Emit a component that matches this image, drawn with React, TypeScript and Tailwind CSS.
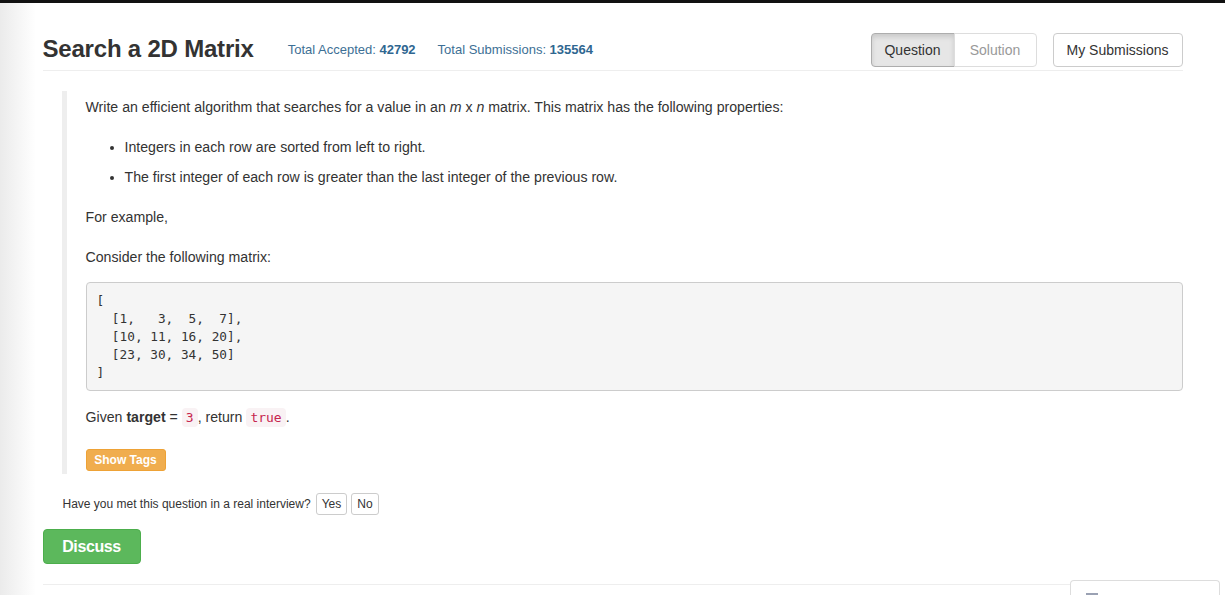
const font = { fontFamily: '"Liberation Sans", Arial, sans-serif' };
const mono = { fontFamily: '"DejaVu Sans Mono", "Liberation Mono", monospace' };

function Header() {
  return (
    <div className="flex items-center border-b border-[#eee] pt-[30px] pb-[3px]">
      <h1 className="-mt-[3px] text-[24px] leading-[34px] font-bold tracking-[-0.2px] text-[#333]">
        Search a 2D Matrix
      </h1>
      <div className="ml-[34px] flex gap-[22px] text-[13px] text-[#3d6f95]">
        <span>
          Total Accepted: <b className="text-[#2f6791]">42792</b>
        </span>
        <span>
          Total Submissions: <b className="text-[#2f6791]">135564</b>
        </span>
      </div>
      <div className="ml-auto flex">
        <button className="h-[34px] w-[84px] rounded-l-[4px] border border-[#adadad] bg-[#e6e6e6] text-[14px] text-[#333] shadow-[inset_0_3px_5px_rgba(0,0,0,0.125)]">
          Question
        </button>
        <button className="-ml-px h-[34px] w-[83px] rounded-r-[4px] border border-[#ddd] bg-white text-[14px] text-[#999]">
          Solution
        </button>
        <button className="ml-[16px] h-[34px] w-[130px] rounded-[4px] border border-[#ccc] bg-white text-[14px] text-[#333]">
          My Submissions
        </button>
      </div>
    </div>
  );
}

function Question() {
  return (
    <blockquote className="mt-[20px] ml-[19px] border-l-[5px] border-[#eee] pt-[6px] pb-[3px] pl-[19px] text-[14.15px] leading-[20px] text-[#333]">
      <p className="mb-[20px]">
        Write an efficient algorithm that searches for a value in an <i>m</i> x <i>n</i> matrix. This matrix has the following properties:
      </p>
      <ul className="mb-[20px] list-disc pl-[39px]">
        <li className="mb-[10px]">Integers in each row are sorted from left to right.</li>
        <li className="mb-[10px]">The first integer of each row is greater than the last integer of the previous row.</li>
      </ul>
      <p className="mb-[20px]">For example,</p>
      <p className="mb-[15px]">Consider the following matrix:</p>
      <pre
        className="mb-[16px] rounded-[4px] border border-[#ccc] bg-[#f5f5f5] px-[10px] py-[8.5px] text-[12.75px] leading-[18px] text-[#333]"
        style={mono}
      >
{`[
  [1,   3,  5,  7],
  [10, 11, 16, 20],
  [23, 30, 34, 50]
]`}
      </pre>
      <p className="mb-[21px]">
        Given <b>target</b> ={" "}
        <code className="rounded-[4px] bg-[#f9f2f4] px-[4px] py-[2px] text-[13px] text-[#c7254e]" style={mono}>
          3
        </code>
        , return{" "}
        <code className="rounded-[4px] bg-[#f9f2f4] px-[4px] py-[2px] text-[13px] text-[#c7254e]" style={mono}>
          true
        </code>
        .
      </p>
      <button className="h-[22px] w-[80px] rounded-[3px] border border-[#eea236] bg-[#f0ad4e] text-[12px] font-bold text-white">
        Show Tags
      </button>
    </blockquote>
  );
}

export default function App() {
  return (
    <div className="min-h-[595px] bg-[linear-gradient(to_right,#ebebeb,#ffffff_36px)]" style={font}>
      <div className="h-[3px] bg-[#111]" />
      <div className="mx-auto w-[1140px]">
        <Header />
        <Question />
        <div className="mt-[19px] ml-[20px] flex items-center gap-[4px] text-[12px] text-[#333]">
          <span className="mr-[1px]">Have you met this question in a real interview?</span>
          <button className="h-[22px] rounded-[3px] border border-[#ccc] bg-white px-[5px] text-[12px]">Yes</button>
          <button className="h-[22px] rounded-[3px] border border-[#ccc] bg-white px-[5px] text-[12px]">No</button>
        </div>
        <button className="mt-[14px] h-[35px] w-[98px] rounded-[4px] border border-[#4cae4c] bg-[#5cb85c] text-[16px] font-bold tracking-[-0.4px] text-white">
          Discuss
        </button>
        <div className="mt-[20px] w-[1027px] border-t border-[#eee]" />
      </div>
      <div className="fixed right-[5px] bottom-0 h-[15px] w-[150px] rounded-t-[4px] border border-b-0 border-[#ddd] bg-white">
        <div className="mt-[12px] ml-[15px] h-[3px] w-[12px] bg-[#9aa1b3]" />
      </div>
    </div>
  );
}
